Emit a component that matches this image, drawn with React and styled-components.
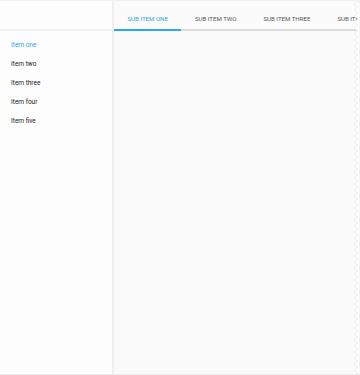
import React, {useState} from 'react';
import styled, {createGlobalStyle} from 'styled-components';

const GlobalStyle = createGlobalStyle`
    html, body {
        margin: 0;
        padding: 0;
        background: #fafafa;
        font-family: Roboto, 'Liberation Sans', sans-serif;
    }
`

const Frame = styled.div`
    position: relative;
    display: flex;
    width: 360px;
    height: 375px;
    overflow: hidden;
    box-sizing: border-box;
    border-top: 1px solid #f2f2f2;
    border-bottom: 1px solid #ededed;
`

const Sidebar = styled.aside`
    width: 112px;
    flex-shrink: 0;
    display: flex;
    flex-direction: column;
    background: #fdfdfd;
    border-right: 2px solid #efefef;
`

const SideHead = styled.div`
    height: 28px;
    border-bottom: 2px solid #f0f0f0;
`

const Menu = styled.ul`
    list-style: none;
    margin: 0;
    padding: 5px 0 0;
`

const MenuItem = styled.li`
    height: 19px;
    line-height: 19px;
    padding-left: 11px;
    font-size: 6.5px;
    color: ${p => p.$active ? '#2aa8e8' : '#222'};
    cursor: pointer;
`

const Main = styled.main`
    flex: 1;
    display: flex;
    flex-direction: column;
    background: #fafafa;
`

const Tabs = styled.nav`
    height: 30px;
    padding-top: 6px;
    display: flex;
    box-sizing: border-box;
    border-bottom: 2px solid #dcdcdc;
    background: #fbfbfb;
    white-space: nowrap;
`

const Tab = styled.div`
    padding: 0 13.5px;
    display: flex;
    align-items: center;
    font-size: 6.1px;
    color: ${p => p.$active ? '#2aa8e8' : '#555'};
    position: relative;
    cursor: pointer;
    &::after {
        content: '';
        display: ${p => p.$active ? 'block' : 'none'};
        position: absolute;
        left: 0;
        right: 0;
        bottom: -2px;
        height: 2px;
        background: #2aa8e8;
    }
`

const Torn = styled.svg`
    position: absolute;
    top: 0;
    right: 0;
    width: 7px;
    height: 375px;
`

const items = ['Item one', 'Item two', 'Item three', 'Item four', 'Item five'];
const tabs = ['SUB ITEM ONE', 'SUB ITEM TWO', 'SUB ITEM THREE', 'SUB ITEM FOUR'];

// zigzag points for the torn right edge
const zig = () => {
    let pts = ['7,0'];
    for (let y = 0; y <= 378; y += 6) {
        pts.push(`1,${y + 3}`, `5,${y + 6}`);
    }
    pts.push('7,378');
    return pts.join(' ');
}

const App = () => {
    const [item, setItem] = useState(0);
    const [tab, setTab] = useState(0);

    return (
        <>
            <GlobalStyle />
            <Frame>
                <Sidebar>
                    <SideHead />
                    <Menu>
                        {items.map((t, i) => (
                            <MenuItem key={t} $active={i === item} onClick={() => setItem(i)}>{t}</MenuItem>
                        ))}
                    </Menu>
                </Sidebar>
                <Main>
                    <Tabs>
                        {tabs.map((t, i) => (
                            <Tab key={t} $active={i === tab} onClick={() => setTab(i)}>{t}</Tab>
                        ))}
                    </Tabs>
                </Main>
                <Torn viewBox="0 0 7 375" preserveAspectRatio="none">
                    <polygon points={zig()} fill="#fff" stroke="#e4e4e4" strokeWidth="0.6" />
                </Torn>
            </Frame>
        </>
    )
}

export default App;
